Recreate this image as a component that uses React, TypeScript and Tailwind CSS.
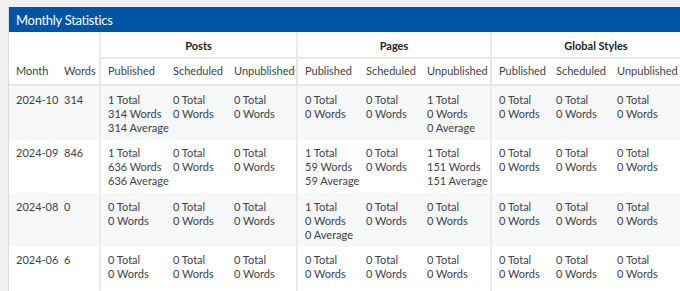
import React from "react";

type Cell = string[];
type Row = { month: string; words: string; cells: Cell[] };

const z = ["0 Total", "0 Words"];
const rows: Row[] = [
  {
    month: "2024-10",
    words: "314",
    cells: [
      ["1 Total", "314 Words", "314 Average"], z, z,
      z, z, ["1 Total", "0 Words", "0 Average"],
      z, z, z,
    ],
  },
  {
    month: "2024-09",
    words: "846",
    cells: [
      ["1 Total", "636 Words", "636 Average"], z, z,
      ["1 Total", "59 Words", "59 Average"], z, ["1 Total", "151 Words", "151 Average"],
      z, z, z,
    ],
  },
  {
    month: "2024-08",
    words: "0",
    cells: [
      z, z, z,
      ["1 Total", "0 Words", "0 Average"], z, z,
      z, z, z,
    ],
  },
  {
    month: "2024-06",
    words: "6",
    cells: [z, z, z, z, z, z, z, z, z],
  },
];

const widths = [48, 42, 67, 61, 69, 63, 61, 70, 59, 61, 90];
const sub = ["Published", "Scheduled", "Unpublished"];

export default function App() {
  return (
    <div
      className="h-[291px] w-[680px] overflow-hidden bg-[#f0f0f1] pt-[7px] pl-[8px] text-[11px] text-[#3c434a]"
      style={{ fontFamily: '"Segoe UI", Lato, sans-serif' }}
    >
      <div className="w-[700px] border-l border-[#dcdcde] bg-white">
        <div className="h-[25px] bg-[#0054a6] pl-[7px] text-[13px] tracking-[-0.3px] leading-[26px] text-white">
          Monthly Statistics
        </div>
        <table
          className="table-fixed border-separate border-spacing-0"
          style={{ width: widths.reduce((a, b) => a + b, 0) }}
        >
          <colgroup>
            {widths.map((w, i) => (
              <col key={i} style={{ width: w }} />
            ))}
          </colgroup>
          <thead>
            <tr>
              <th colSpan={2} className="h-[27px]"></th>
              {["Posts", "Pages", "Global Styles"].map((g) => (
                <th
                  key={g}
                  colSpan={3}
                  className="h-[27px] border-l-2 border-b-2 border-[#ebebeb] pt-[3px] text-center font-bold text-[#1d2327]"
                >
                  {g}
                </th>
              ))}
            </tr>
            <tr>
              <th className="h-[27px] border-b-2 border-[#e6e6e6] pl-[7px] text-left font-normal whitespace-nowrap">
                Month
              </th>
              <th className="border-b-2 border-[#e6e6e6] pl-[7px] text-left font-normal whitespace-nowrap">
                Words
              </th>
              {[0, 1, 2].map((g) =>
                sub.map((s, i) => (
                  <th
                    key={g + s}
                    className={
                      i === 0
                        ? "border-b-2 border-l-2 border-[#e6e6e6] pl-[7px] text-left font-normal whitespace-nowrap"
                        : "border-b-2 border-[#e6e6e6] pl-[7px] text-left font-normal whitespace-nowrap"
                    }
                  >
                    {s}
                  </th>
                ))
              )}
            </tr>
          </thead>
          <tbody>
            {rows.map((r, ri) => (
              <tr key={r.month} className={ri % 2 === 0 ? "bg-[#f6f7f7]" : "bg-white"}>
                <td className="h-[53.5px] pl-[7px] pt-[6.5px] align-top leading-[14px] whitespace-nowrap">
                  {r.month}
                </td>
                <td className="pl-[7px] pt-[6.5px] align-top leading-[14px] whitespace-nowrap">{r.words}</td>
                {r.cells.map((c, ci) => (
                  <td
                    key={ci}
                    className={
                      ci % 3 === 0
                        ? "border-l-2 border-[#ebebeb] pl-[7px] pt-[6.5px] pb-[5px] align-top leading-[14px] whitespace-nowrap"
                        : "pl-[7px] pt-[6.5px] pb-[5px] align-top leading-[14px] whitespace-nowrap"
                    }
                  >
                    {c.map((l, li) => (
                      <div key={li}>{l}</div>
                    ))}
                  </td>
                ))}
              </tr>
            ))}
          </tbody>
        </table>
      </div>
    </div>
  );
}
